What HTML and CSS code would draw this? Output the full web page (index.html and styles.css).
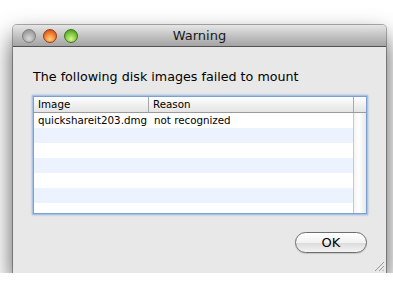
FILE: index.html
```html
<!DOCTYPE html>
<html lang="en">
<head>
  <meta charset="UTF-8" />
  <title>Warning</title>
  <link rel="stylesheet" href="styles.css">
</head>
<body>
  <div class="window">
    <div class="titlebar">
      <div class="lights">
        <span class="light light-gray"></span>
        <span class="light light-red"></span>
        <span class="light light-green"></span>
      </div>
      <div class="title">Warning</div>
    </div>

    <div class="content">
      <p class="message">The following disk images failed to mount</p>

      <div class="table">
        <div class="head">
          <div class="col col-image">Image</div>
          <div class="col col-reason">Reason</div>
          <div class="corner"></div>
        </div>
        <div class="body">
          <div class="rows">
            <div class="row"><div class="col col-image">quickshareit203.dmg</div><div class="col col-reason">not recognized</div></div>
            <div class="row"></div>
            <div class="row"></div>
            <div class="row"></div>
            <div class="row"></div>
            <div class="row"></div>
            <div class="row"></div>
          </div>
          <div class="scroller"></div>
        </div>
      </div>

      <div class="actions">
        <button class="ok-button">OK</button>
      </div>
    </div>

    <svg class="grip" width="10" height="10" viewBox="0 0 10 10">
      <path d="M1 10 L10 1 M5 10 L10 5 M8.5 10 L10 8.5" stroke="#9a9a9a" stroke-width="1"/>
    </svg>
  </div>
</body>
</html>
```

FILE: styles.css
```css
body {
  margin: 0;
  background: #ffffff;
  font-family: "DejaVu Sans", sans-serif;
  overflow: hidden;
}

.window {
  position: relative;
  margin: 25px 0 0 13px;
  width: 373px;
  height: 248px;
  background: #e8e8e8;
  border-radius: 4px 4px 0 0;
  box-shadow: 0 12px 24px rgba(0, 0, 0, 0.7), 0 0 0 1px rgba(0, 0, 0, 0.3);
  display: flex;
  flex-direction: column;
}

.titlebar {
  height: 21px;
  border-bottom: 1px solid #525252;
  border-radius: 4px 4px 0 0;
  background: linear-gradient(#e6e6e6, #bdbdbd 60%, #a4a4a4);
  display: flex;
  align-items: center;
  position: relative;
}

.lights {
  display: flex;
  gap: 7px;
  padding-left: 9px;
}

.light {
  width: 14px;
  height: 14px;
  border-radius: 50%;
  box-sizing: border-box;
}

.light-gray {
  background: radial-gradient(circle at 50% 70%, #d8d8d8, #a6a6a6 60%, #8c8c8c);
  border: 1px solid #7d7d7d;
}

.light-red {
  background: radial-gradient(circle at 50% 75%, #ffd07a, #f07a2c 55%, #b8401a);
  border: 1px solid #9b3a17;
}

.light-green {
  background: radial-gradient(circle at 50% 75%, #d6f58c, #79c43a 55%, #3d8a1a);
  border: 1px solid #3a7619;
}

.title {
  position: absolute;
  left: 0;
  right: 0;
  text-align: center;
  font-size: 13px;
  color: #1a1a1a;
  pointer-events: none;
}

.content {
  flex: 1;
  padding: 0 19px 0 20px;
  display: flex;
  flex-direction: column;
}

.message {
  margin: 22px 0 12px;
  font-size: 12.7px;
  color: #000;
}

.table {
  height: 116px;
  border: 1px solid #7a9fd0;
  box-shadow: 0 0 0 1px #a9c3e6, 0 0 2px 1px #9ab8e0;
  background: #fff;
  display: flex;
  flex-direction: column;
  font-size: 10.3px;
  color: #000;
  overflow: hidden;
}

.head {
  height: 15px;
  display: flex;
  background: linear-gradient(#ffffff, #f1f1f1 50%, #e4e4e4);
  border-bottom: 1px solid #9a9a9a;
}

.head .col {
  line-height: 15px;
}

.col-image {
  width: 115px;
  padding-left: 4px;
  box-sizing: border-box;
}

.head .col-image {
  border-right: 1px solid #a8a8a8;
}

.col-reason {
  flex: 1;
  padding-left: 4px;
}

.head .col-reason {
  border-right: 1px solid #a8a8a8;
}

.corner {
  width: 12px;
}

.body {
  flex: 1;
  display: flex;
  overflow: hidden;
}

.rows {
  flex: 1;
}

.row {
  height: 15px;
  display: flex;
  line-height: 15px;
}

.row:nth-child(even) {
  background: #edf3fe;
}

.row .col-image {
  width: 116px;
}

.scroller {
  width: 12px;
  border-left: 1px solid #c8c8c8;
  background: linear-gradient(to right, #f4f4f4, #ffffff 40%, #e8e8e8);
}

.actions {
  display: flex;
  justify-content: flex-end;
  margin-top: 18px;
}

.ok-button {
  width: 72px;
  height: 21px;
  border-radius: 11px;
  border: 1px solid #6e6e6e;
  background: linear-gradient(#ffffff, #f2f2f2 50%, #dcdcdc 55%, #f4f4f4);
  font-family: "DejaVu Sans", sans-serif;
  font-size: 13px;
  color: #000;
  padding: 0;
  box-shadow: 0 1px 1px rgba(0, 0, 0, 0.15);
}

.grip {
  position: absolute;
  right: 2px;
  bottom: 2px;
}
```
